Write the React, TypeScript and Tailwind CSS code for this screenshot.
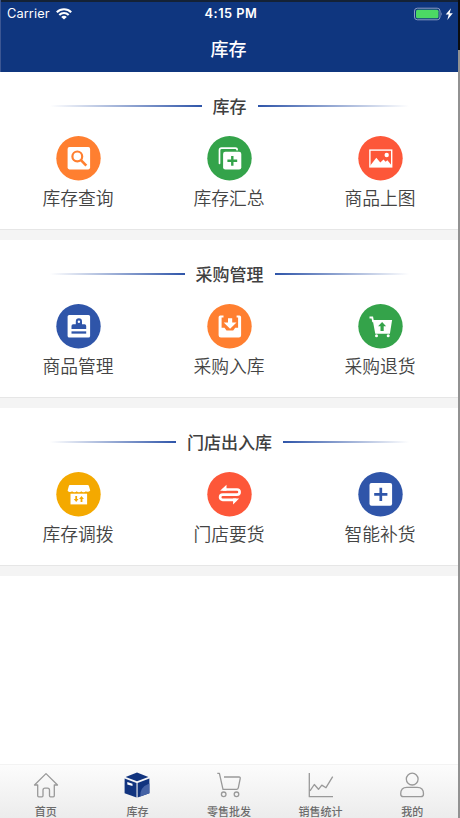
import type { ReactNode } from "react";

interface MenuItem {
  label: string;
  color: string;
  icon: ReactNode;
}

interface MenuSection {
  title: string;
  items: MenuItem[];
}

interface Tab {
  label: string;
  icon: ReactNode;
}

const sections: MenuSection[] = [
  {
    title: "库存",
    items: [
      {
        label: "库存查询",
        color: "text-[#ff7f30]",
        icon: (
          <>
            <rect x="11.3" y="11" width="22.5" height="22.3" rx="1.8" fill="#fff" />
            <circle cx="21" cy="20.3" r="4.9" fill="none" stroke="currentColor" strokeWidth="2.2" />
            <path d="M24.4 23.8 30 29.6" stroke="currentColor" strokeWidth="2.6" />
          </>
        ),
      },
      {
        label: "库存汇总",
        color: "text-[#34a34a]",
        icon: (
          <>
            <path
              d="M12.2 27.2V14.2q0-2.2 2.2-2.2H28q1.8 0 1.8 1.6"
              fill="none"
              stroke="#fff"
              strokeWidth="1.7"
              strokeLinecap="round"
            />
            <rect x="15.8" y="15.6" width="18.2" height="17.8" rx="2.2" fill="#fff" />
            <path d="M25 19.8v9.8M20.1 24.7h9.8" stroke="currentColor" strokeWidth="2.4" />
          </>
        ),
      },
      {
        label: "商品上图",
        color: "text-[#fd5739]",
        icon: (
          <>
            <rect x="11.6" y="14" width="21.8" height="16.8" fill="none" stroke="#fff" strokeWidth="1.4" />
            <path d="m12 29.5 6-7.8 4 4.8 3.2-3.2 2.1 2.4 1.8-1.5 3.9 4.6v2H12z" fill="#fff" />
            <circle cx="28.4" cy="18.9" r="2.2" fill="#fff" />
          </>
        ),
      },
    ],
  },
  {
    title: "采购管理",
    items: [
      {
        label: "商品管理",
        color: "text-[#2f55a9]",
        icon: (
          <>
            <rect x="11.3" y="11" width="22.5" height="22.5" rx="1.6" fill="#fff" />
            <path
              d="M15.2 24.8v-3q0-1.6 1.6-1.6h2.7v-2.9a3.1 3.1 0 0 1 6.2 0v2.9h2.6q1.6 0 1.6 1.6v3z"
              fill="currentColor"
            />
            <circle cx="22.6" cy="17.6" r="1.2" fill="#fff" />
            <path d="M15.2 28.4h14.7" stroke="currentColor" strokeWidth="2.3" />
          </>
        ),
      },
      {
        label: "采购入库",
        color: "text-[#ff7f30]",
        icon: (
          <>
            <path
              d="M16.2 11.5H13q-1.7 0-1.7 1.7v18q0 2.3 2.3 2.3h18q2.2 0 2.2-2.3v-18q0-1.7-1.7-1.7h-2.8v2h1.5v10.2h-2.9l-2 2.7h-6.7l-2-2.7h-2.9V13.5h1.9z"
              fill="#fff"
            />
            <path d="M20.7 14.2h4.2v4.3h4.3l-6.4 6.1-6.4-6.1h4.3z" fill="#fff" />
          </>
        ),
      },
      {
        label: "采购退货",
        color: "text-[#34a34a]",
        icon: (
          <>
            <path d="M11.2 13.4h2.8l.9 4.6" fill="none" stroke="#fff" strokeWidth="1.8" />
            <path d="M14.4 16h19.4l-2.2 13.7H17z" fill="#fff" />
            <circle cx="18.2" cy="31.6" r="1.5" fill="#fff" />
            <circle cx="29.9" cy="31.6" r="1.5" fill="#fff" />
            <path d="m23.8 17.8 4 4.3h-2.4V27h-3.2v-4.9h-2.4z" fill="currentColor" />
          </>
        ),
      },
    ],
  },
  {
    title: "门店出入库",
    items: [
      {
        label: "库存调拨",
        color: "text-[#f4a900]",
        icon: (
          <>
            <path
              d="M13.6 13h17.6q1.2 0 1.5 1.2l1.2 4.2a2.6 2 0 0 1-4.3.7 2.6 2 0 0 1-4.6 0 2.6 2 0 0 1-4.6 0 2.6 2 0 0 1-4.6 0 2.6 2 0 0 1-4.5-.7l1.2-4.2q.3-1.2 1.1-1.2z"
              fill="#fff"
            />
            <path d="M14.2 21.6h16.6v10.7H14.2z" fill="#fff" />
            <path
              d="M19 24h1.8v2.9h1.4l-2.3 2.9-2.4-2.9H19zM24.3 29.8h1.8v-2.9h1.5L25.2 24l-2.4 2.9h1.5z"
              fill="currentColor"
            />
          </>
        ),
      },
      {
        label: "门店要货",
        color: "text-[#fd5739]",
        icon: (
          <>
            <path
              d="M15.5 17.4h14.2a2.6 2.6 0 0 1 0 5.2H15.4a2.6 2.6 0 0 0 0 5.2H29"
              fill="none"
              stroke="#fff"
              strokeWidth="2.7"
            />
            <path d="M12.8 18.7 19.2 12.6v6.1zM31.8 26.4l-6 6.1v-6.1z" fill="#fff" />
          </>
        ),
      },
      {
        label: "智能补货",
        color: "text-[#2f55a9]",
        icon: (
          <>
            <rect x="11.2" y="11" width="22.6" height="22.6" rx="2" fill="#fff" />
            <path d="M22.5 15.7v13.2M15.9 22.3h13.2" stroke="currentColor" strokeWidth="2.7" />
          </>
        ),
      },
    ],
  },
];

// every tab icon is drawn on a 26 x 26 grid
const tabs: Tab[] = [
  {
    label: "首页",
    icon: (
      <path d="M1.5 13 13 1.6 24.5 13h-3.2v10.7q0 1.1-1.1 1.1h-2.7q-1 0-1-1.1v-5.5q0-2-2-2h-2.5q-2 0-2 2v5.5q0 1.1-1 1.1H5.8q-1.1 0-1.1-1.1V13z" />
    ),
  },
  {
    label: "库存",
    icon: (
      <g stroke="none" fill="#12347f">
        <path d="M13 .5 24.4 4.9 13 9.3 1.6 4.900z" />
        <path d="M.6 6.6 12.5 11v14.4L.6 21.3z" />
        <path d="M13.6 11 25.4 6.6v14.7l-11.800 4.100z" />
        <path d="M25.4 11.5v9.8l-9.200 3.200q-.5-9.500 9.200-13z" fill="#4562a5" />
        <path d="m3.3 10 5.200 1.700v2.400l-5.200-1.700z" fill="#fff" />
      </g>
    ),
  },
  {
    label: "零售批发",
    icon: (
      <>
        <path d="M1.3 1.3h2.1L7 17.3h13.5q1.4 0 1.8-1.5L24.2 6.6Q24.5 5 23 5H8" />
        <circle cx="7.7" cy="22.3" r="2.3" />
        <circle cx="20.5" cy="22.3" r="2.3" />
      </>
    ),
  },
  {
    label: "销售统计",
    icon: <path d="M1.3 1v23.7H25M2 18.8l4.3-6.3 4.2 4.8 3.3-4.2 4.2 2.6L24.7 4.6" />,
  },
  {
    label: "我的",
    icon: (
      <>
        <circle cx="13.2" cy="7.1" r="5.9" />
        <path d="M7.9 15.3h10.4q6.2 0 6.2 6.6 0 2.8-2.6 2.8H4.3q-2.6 0-2.6-2.8 0-6.6 6.2-6.6z" />
      </>
    ),
  },
];

const StatusBar = () => {
  return (
    <div className="grid h-6 grid-cols-3 items-center border-t-2 border-[#142236] pt-0.5 pr-1 pl-1.5 font-['Inter','Liberation_Sans',sans-serif]">
      <div className="flex items-center gap-1.5">
        <span className="text-[12.8px] tracking-[0.1px]">Carrier</span>
        <svg className="h-3 w-4" viewBox="0 0 16 12" fill="none" stroke="#fff" strokeWidth="2.1">
          <path d="M.8 4.2a10.3 10.3 0 0 1 14.4 0M3.3 6.9a6.6 6.6 0 0 1 9.4 0" />
          <path d="M8 11.6 5.2 8.9a3.9 3.9 0 0 1 5.6 0z" fill="#fff" stroke="none" />
        </svg>
      </div>
      <span className="pl-px text-center text-[12.8px] font-semibold tracking-[0.5px] whitespace-nowrap">
        4:15 PM
      </span>
      <svg className="h-3.5 w-10 justify-self-end" viewBox="0 0 40 14">
        <rect x=".5" y="1.2" width="25.5" height="11.6" rx="2.8" fill="none" stroke="#8b9cc1" />
        <rect x="2" y="2.7" width="22.5" height="8.6" rx="1.5" fill="#4cd964" />
        <path d="M27.3 5q1.5 2 0 4z" fill="#8b9cc1" />
        <path d="m37 1.2-5.3 6.4h3L33.3 13l5.5-6.800h-3.200z" fill="#fff" />
      </svg>
    </div>
  );
};

const Section = ({ title, items }: MenuSection) => {
  return (
    <section className="h-[158px] shrink-0 border-b border-[#e6e6e6] bg-white pt-[22px]">
      <div className="flex items-center gap-[11px] pr-[49px] pl-[50px]">
        <div className="h-0.5 flex-1 bg-linear-to-r from-transparent to-[#2f55a9]" />
        <h2 className="text-[17px] leading-6 font-medium text-[#404040]">{title}</h2>
        <div className="h-0.5 flex-1 bg-linear-to-r from-[#2f55a9] to-transparent" />
      </div>
      <div className="grid grid-cols-3 px-[2.5px] pt-[18px]">
        {items.map((item) => (
          <button key={item.label} className="flex flex-col items-center">
            <svg className={`size-[45px] ${item.color}`} viewBox="-0.3 -0.1 45 45">
              <circle cx="22.2" cy="22.2" r="22.2" fill="currentColor" />
              {item.icon}
            </svg>
            <span className="mt-1 text-[17.8px] leading-6 font-[350] text-[#444]">{item.label}</span>
          </button>
        ))}
      </div>
    </section>
  );
};

const App = () => {
  return (
    <div className="flex h-[818px] w-[460px] overflow-hidden bg-[#929292] font-['Noto_Sans_CJK_SC',sans-serif]">
      <div className="flex w-[458px] flex-col bg-white">
        <header className="h-[72px] shrink-0 border-l border-[#3c5793] bg-[#0f367f] text-white">
          <StatusBar />
          <h1 className="pt-2.5 pr-0.5 text-center text-[18px] leading-7 font-medium">库存</h1>
        </header>

        <main className="flex flex-1 flex-col gap-[10px] bg-[#f4f4f4]">
          {sections.map((section) => (
            <Section key={section.title} {...section} />
          ))}
          <div className="flex-1 bg-white" />
        </main>

        <nav className="grid h-[54px] shrink-0 grid-cols-5 border-t border-[#f3f3f3] bg-linear-to-b from-[#fcfcfc] to-[#ececec]">
          {tabs.map((tab) => (
            <button key={tab.label} className="flex flex-col items-center pt-[7px]">
              <svg
                className="size-[26px] shrink-0"
                viewBox="0 0 26 26"
                fill="none"
                stroke="#999"
                strokeWidth="1.3"
                strokeLinejoin="round"
              >
                {tab.icon}
              </svg>
              <span className="mt-[5px] text-[11px] leading-4 font-medium text-[#6b6b6b]">{tab.label}</span>
            </button>
          ))}
        </nav>
      </div>
      <div className="w-0.5">
        <div className="h-[50px] bg-[#0b0d10]" />
      </div>
    </div>
  );
};

export default App;
